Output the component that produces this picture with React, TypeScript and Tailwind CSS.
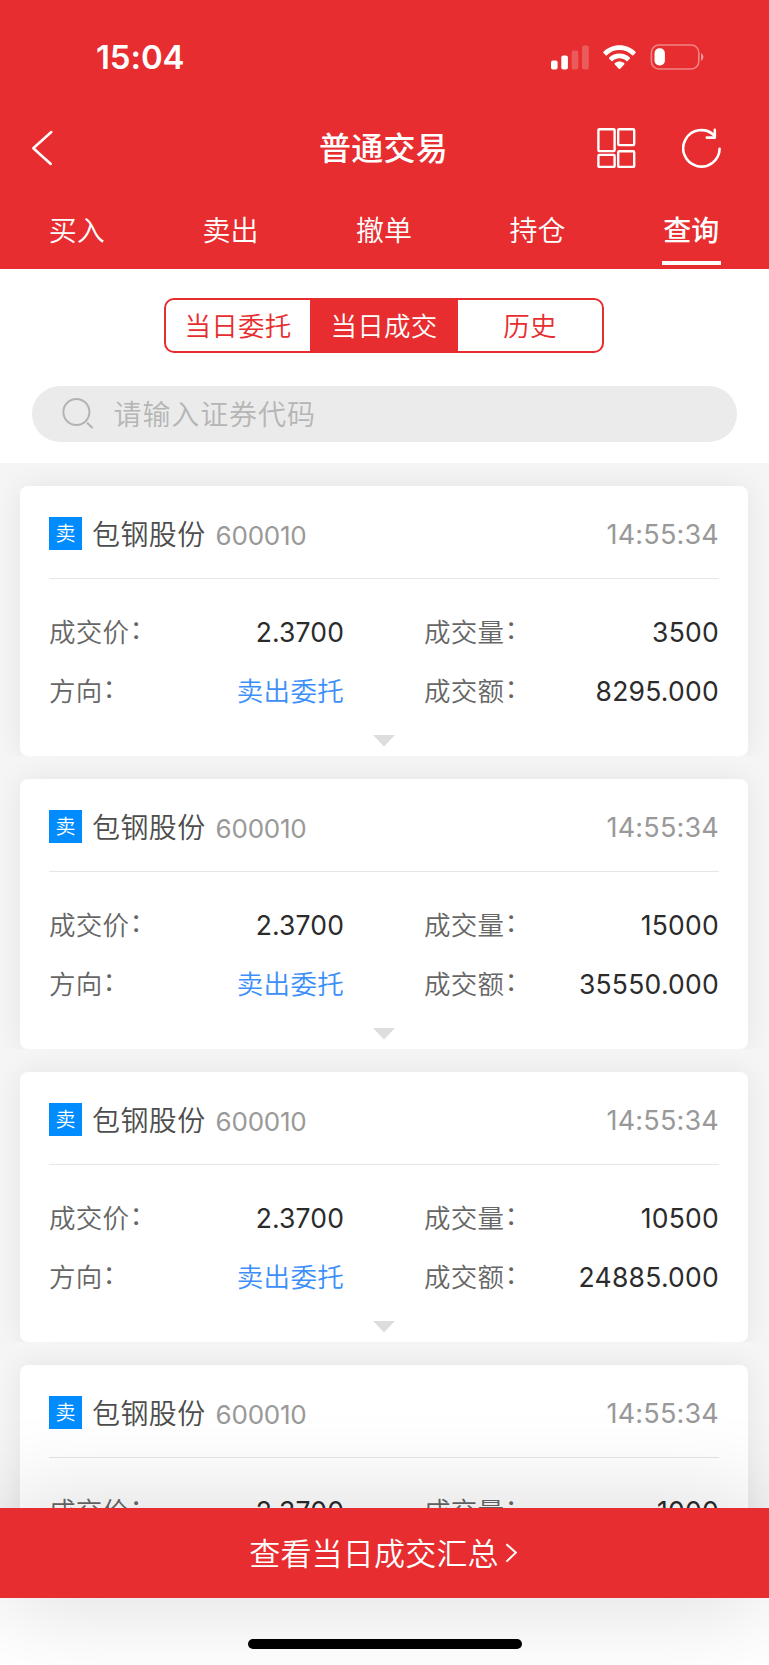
import React from "react";
import { clsx } from "clsx";

const tabs = ["买入", "卖出", "撤单", "持仓", "查询"];

const trades = [
  { volume: "3500", amount: "8295.000" },
  { volume: "15000", amount: "35550.000" },
  { volume: "10500", amount: "24885.000" },
  { volume: "1000", amount: "2370.000" },
];

function StatusBar() {
  return (
    <div className="flex h-[114px] items-center justify-between pr-[64px] pl-[96px]">
      <span className="text-[33px] leading-[40px] font-semibold tracking-[-0.1px]">15:04</span>
      <div className="flex items-center">
        <svg width="38" height="25" viewBox="0 0 38 25" fill="#fff">
          <rect x="0" y="15.5" width="6.6" height="9" rx="2" />
          <rect x="10.3" y="10.5" width="6.6" height="14" rx="2" />
          <rect x="20.7" y="5.5" width="6.6" height="19" rx="2" opacity=".22" />
          <rect x="31" y="0.5" width="6.8" height="24" rx="2" opacity=".22" />
        </svg>
        <svg className="ml-[14px]" width="33" height="25" viewBox="0 0 33 25" fill="#fff">
          <path d="M16.5 0.3C22.8 0.3 28.5 2.8 32.5 6.8C32.9 7.2 32.9 7.7 32.5 8.1L30.4 10.2C30 10.6 29.5 10.6 29.1 10.2C25.8 7 21.4 5.1 16.5 5.1C11.6 5.1 7.2 7 3.9 10.2C3.5 10.6 3 10.6 2.6 10.2L0.5 8.1C0.1 7.7 0.1 7.2 0.5 6.8C4.5 2.8 10.2 0.3 16.5 0.3Z" />
          <path d="M16.5 8.4C20.5 8.4 24.1 9.9 26.8 12.4C27.2 12.8 27.2 13.3 26.8 13.7L24.6 15.9C24.2 16.3 23.7 16.3 23.3 15.9C21.5 14.3 19.1 13.3 16.5 13.3C13.9 13.3 11.5 14.3 9.7 15.9C9.3 16.3 8.8 16.3 8.4 15.9L6.2 13.7C5.8 13.3 5.8 12.8 6.2 12.4C8.9 9.9 12.5 8.4 16.5 8.4Z" />
          <path d="M16.5 16.5C18.3 16.5 20 17.1 21.2 18.1C21.6 18.5 21.6 19 21.2 19.4L17.2 23.8C16.8 24.2 16.2 24.2 15.8 23.8L11.8 19.4C11.4 19 11.4 18.5 11.8 18.1C13 17.1 14.7 16.5 16.5 16.5Z" />
        </svg>
        <svg className="ml-[14px]" width="55" height="26" viewBox="0 0 55 26" fill="none">
          <rect x="1.4" y="1" width="47.4" height="24" rx="7.5" stroke="#fff" strokeOpacity=".42" strokeWidth="1.6" />
          <rect x="4.5" y="4.3" width="10.4" height="17.2" rx="4.8" fill="#fff" />
          <path d="M51 9.2C52.4 9.8 53.4 11.2 53.4 13C53.4 14.8 52.4 16.2 51 16.8Z" fill="#fff" fillOpacity=".5" />
        </svg>
      </div>
    </div>
  );
}

function NavBar() {
  return (
    <div className="grid h-[68px] grid-cols-3 items-center pr-[47px] pl-[31px]">
      <svg width="23" height="36" viewBox="0 0 23 36" fill="none" stroke="#fff" strokeWidth="2.5" strokeLinecap="round" strokeLinejoin="round">
        <path d="M20.3 2L2.3 18.2L19.8 34" />
      </svg>
      <h1 className="pt-[2px] pl-[14px] text-center text-[32px] leading-[44px] font-medium tracking-[0.3px] whitespace-nowrap">普通交易</h1>
      <div className="flex items-center justify-end gap-[46px]">
        <svg width="39" height="42" viewBox="0 0 39 42" fill="none" stroke="#fff" strokeWidth="2.4">
          <rect x="1.4" y="2.3" width="16.2" height="21.8" rx="1" />
          <rect x="21.2" y="2.3" width="16" height="15.8" rx="1" />
          <rect x="1.4" y="27.9" width="16.2" height="12" rx="1" />
          <rect x="21.2" y="24.3" width="16" height="15.6" rx="1" />
        </svg>
        <svg width="40" height="42" viewBox="0 0 40 42" fill="none" stroke="#fff" strokeWidth="2.6" strokeLinecap="round">
          <path d="M37.6 21.7A18.2 18.2 0 1 1 32 8.2" />
          <path d="M32.8 2.9V10.6H24.8" strokeLinejoin="round" />
        </svg>
      </div>
    </div>
  );
}

function Label({ children }: { children: string }) {
  return (
    <span className="tracking-[0.3px] text-[#666]">
      {children}
      <span className="align-[3px] leading-none">：</span>
    </span>
  );
}

function TradeCard({ volume, amount }: { volume: string; amount: string }) {
  return (
    <div className="h-[293px] shrink-0 overflow-hidden px-5 pt-[23px]">
      <section className="flex h-[270px] flex-col rounded-lg bg-white px-[29px] shadow-[0_0_28px_rgba(0,0,0,0.07)]">
        <div className="flex h-[93px] items-center border-b border-[#e6e6e6] pt-[3px]">
          <span className="flex size-[33px] items-center justify-center bg-[#008cff] pt-[2px] text-[20px] leading-[31px] text-white">卖</span>
          <span className="ml-[10px] pt-[2px] text-[28px] leading-[40px] tracking-[0.4px] text-[#4d4d4d]">包钢股份</span>
          <span className="ml-[10px] pt-[4px] text-[26px] leading-[40px] font-normal tracking-[-0.25px] text-[#999]">600010</span>
          <span className="ml-auto pt-[3px] text-[27px] leading-[40px] font-normal tracking-[0.2px] text-[#999]">14:55:34</span>
        </div>
        <div className="grid grid-cols-[295px_1fr] gap-x-[80px] pt-[24px] text-[26.5px] leading-[59px]">
          <div className="flex justify-between">
            <Label>成交价</Label>
            <span className="font-normal tracking-[0.15px] text-[#2b2b2b]">2.3700</span>
          </div>
          <div className="flex justify-between">
            <Label>成交量</Label>
            <span className="font-normal tracking-[0.25px] text-[#2b2b2b]">{volume}</span>
          </div>
          <div className="flex justify-between">
            <Label>方向</Label>
            <span className="tracking-[0.3px] text-[#3c8ffa]">卖出委托</span>
          </div>
          <div className="flex justify-between">
            <Label>成交额</Label>
            <span className="font-normal tracking-[0.25px] text-[#2b2b2b]">{amount}</span>
          </div>
        </div>
        <svg className="mt-[14px] self-center" width="22" height="12" viewBox="0 0 22 12">
          <path d="M0 0H22L11 11.5Z" fill="#ddd" />
        </svg>
      </section>
    </div>
  );
}

export default function App() {
  return (
    <div className="flex h-[1665px] w-[769px] flex-col overflow-hidden bg-white font-['Inter','Noto_Sans_CJK_SC',sans-serif] font-[350]">
      <header className="h-[269px] shrink-0 bg-[#e72d2f] text-white">
        <StatusBar />
        <NavBar />
        <nav className="flex h-[87px] pr-px">
          {tabs.map((t, i) => (
            <div key={t} className="flex flex-1 flex-col items-center pt-[29px]">
              <span className={clsx("text-[28px] leading-[40px]", i === 4 && "font-medium")}>{t}</span>
              {i === 4 && <span className="mt-[10px] h-[4px] w-[59px] bg-white" />}
            </div>
          ))}
        </nav>
      </header>

      <div className="flex h-[194px] shrink-0 flex-col items-center pt-[29px] pr-px">
        <div className="flex h-[55px] w-[440px] overflow-hidden rounded-[10px] border-2 border-[#e72d2f] text-[26.5px] leading-[53px] tracking-[0.3px] text-[#e72d2f]">
          <span className="flex-1 text-center">当日委托</span>
          <span className="w-[148px] bg-[#e72d2f] text-center text-white">当日成交</span>
          <span className="flex-1 text-center">历史</span>
        </div>
        <div className="mt-[33px] flex h-[56px] w-[705px] items-center rounded-full bg-[#ebebeb] pl-[30px]">
          <svg width="32" height="32" viewBox="0 0 32 32" fill="none" stroke="#b3b3b3" strokeWidth="2">
            <circle cx="14.4" cy="14" r="13" />
            <path d="M25 24.8L30.6 30" />
          </svg>
          <span className="ml-[20px] pt-[2px] text-[28px] leading-[54px] tracking-[0.9px] text-[#b5b5b5]">请输入证券代码</span>
        </div>
      </div>

      <main className="flex min-h-0 flex-1 flex-col overflow-hidden bg-[#f5f5f5] pr-px">
        {trades.map((t) => (
          <TradeCard key={t.volume} volume={t.volume} amount={t.amount} />
        ))}
      </main>

      <footer className="relative h-[157px] shrink-0 bg-white">
        <div className="flex h-[90px] items-center justify-center bg-[#e72d2f] pr-[2px] text-[31px] leading-[90px] tracking-[0.2px] text-white shadow-[0_0_100px_rgba(0,0,0,0.16)]">
          <span className="pt-[2px] leading-[44px]">查看当日成交汇总</span>
          <svg className="ml-[6px]" width="13" height="20" viewBox="0 0 13 20" fill="none" stroke="#fff" strokeWidth="2">
            <path d="M1.4 1.2L10.8 9.6L1.4 18.6" />
          </svg>
        </div>
        <div className="relative mx-auto mt-[41px] h-[10px] w-[274px] rounded-full bg-black" />
      </footer>
    </div>
  );
}
